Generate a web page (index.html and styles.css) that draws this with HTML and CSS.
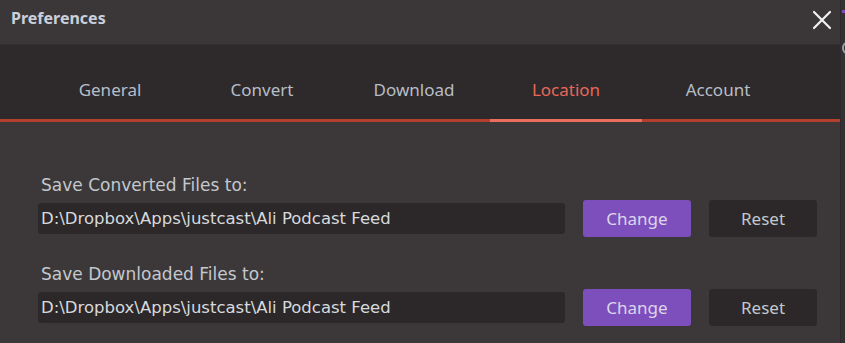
FILE: index.html
```html
<!DOCTYPE html>
<html lang="en">
<head>
    <meta charset="UTF-8">
    <title>Preferences</title>
    <link rel="stylesheet" href="styles.css">
</head>
<body>
    <div class="screen">
        <div class="window">
            <!-- Title bar -->
            <div class="titlebar">
                <span class="title">Preferences</span>
                <button class="close" aria-label="Close">
                    <svg width="20" height="20" viewBox="0 0 20 20">
                        <path d="M2 2 L18 18 M18 2 L2 18" stroke="#f2f2f2" stroke-width="2.2" stroke-linecap="round"/>
                    </svg>
                </button>
            </div>

            <!-- Tabs -->
            <nav class="tabs">
                <div class="tab">General</div>
                <div class="tab">Convert</div>
                <div class="tab">Download</div>
                <div class="tab active">Location</div>
                <div class="tab">Account</div>
            </nav>

            <!-- Location settings -->
            <div class="content">
                <div class="group">
                    <div class="label">Save Converted Files to:</div>
                    <div class="row">
                        <div class="path">D:\Dropbox\Apps\justcast\Ali Podcast Feed</div>
                        <button class="btn change">Change</button>
                        <button class="btn reset">Reset</button>
                    </div>
                </div>
                <div class="group second">
                    <div class="label">Save Downloaded Files to:</div>
                    <div class="row">
                        <div class="path">D:\Dropbox\Apps\justcast\Ali Podcast Feed</div>
                        <button class="btn change">Change</button>
                        <button class="btn reset">Reset</button>
                    </div>
                </div>
            </div>
        </div>
        <!-- edge of the window behind -->
        <div class="edge">
            <span class="edge-mark"></span>
            <span class="edge-arc"></span>
        </div>
    </div>
</body>
</html>
```

FILE: styles.css
```css
* {
    box-sizing: border-box;
}

body {
    margin: 0;
    background-color: #3b3738;
    font-family: "Noto Sans", "Open Sans", Arial, sans-serif;
    overflow: hidden;
}

.screen {
    display: flex;
    width: 845px;
    height: 343px;
}

.window {
    width: 840px;
    display: flex;
    flex-direction: column;
    background-color: #3c3839;
}

.titlebar {
    height: 45px;
    display: flex;
    align-items: center;
    justify-content: space-between;
    padding: 0 8px 0 11px;
    background-color: #3b3738;
    border-bottom: 1px solid #332f30;
}

.title {
    font-size: 16px;
    font-weight: bold;
    color: #c9d0da;
    margin-top: -8px;
}

.close {
    background: none;
    border: none;
    padding: 0;
    width: 20px;
    height: 20px;
    margin-top: -4px;
    display: flex;
    cursor: pointer;
}

.tabs {
    height: 77px;
    display: flex;
    padding-left: 34px;
    background-color: #2e2a2b;
    border-bottom: 3px solid #b3402f;
}

.tab {
    width: 152px;
    display: flex;
    align-items: center;
    justify-content: center;
    padding-top: 14px;
    font-size: 17px;
    color: #b6bec8;
    margin-bottom: -3px;
    border-bottom: 3px solid transparent;
}

.tab.active {
    color: #e8675a;
    border-bottom-color: #ec6c5d;
}

.content {
    padding: 18px 0 0 38px;
}

.group {
    margin-top: 33px;
}

.group.second {
    margin-top: 25px;
}

.label {
    font-family: "DejaVu Sans", Verdana, sans-serif;
    font-size: 17px;
    color: #c3c8ce;
    padding-left: 3px;
    line-height: 24px;
}

.row {
    display: flex;
    align-items: center;
    margin-top: 3px;
}

.path {
    width: 527px;
    height: 31px;
    line-height: 31px;
    padding-left: 3px;
    background-color: #2c2829;
    border-radius: 3px;
    font-family: "DejaVu Sans", Verdana, sans-serif;
    font-size: 16.5px;
    color: #d6dade;
}

.btn {
    width: 108px;
    height: 37px;
    border: none;
    border-radius: 3px;
    font-family: inherit;
    font-size: 17px;
    cursor: pointer;
}

.change {
    margin-left: 18px;
    background-color: #7c4fbd;
    color: #dcd6ea;
}

.reset {
    margin-left: 18px;
    background-color: #2c2829;
    color: #c3c8ce;
}

.edge {
    width: 5px;
    background-color: #353132;
    border-left: 1px solid #2f2b2c;
    position: relative;
    overflow: hidden;
}

.edge-mark {
    position: absolute;
    top: 10px;
    left: 1px;
    width: 4px;
    height: 3px;
    background-color: #7c4fbd;
}

.edge-arc {
    position: absolute;
    top: 42px;
    left: 1px;
    width: 10px;
    height: 12px;
    border: 2px solid #9aa2ac;
    border-radius: 50%;
}
```
